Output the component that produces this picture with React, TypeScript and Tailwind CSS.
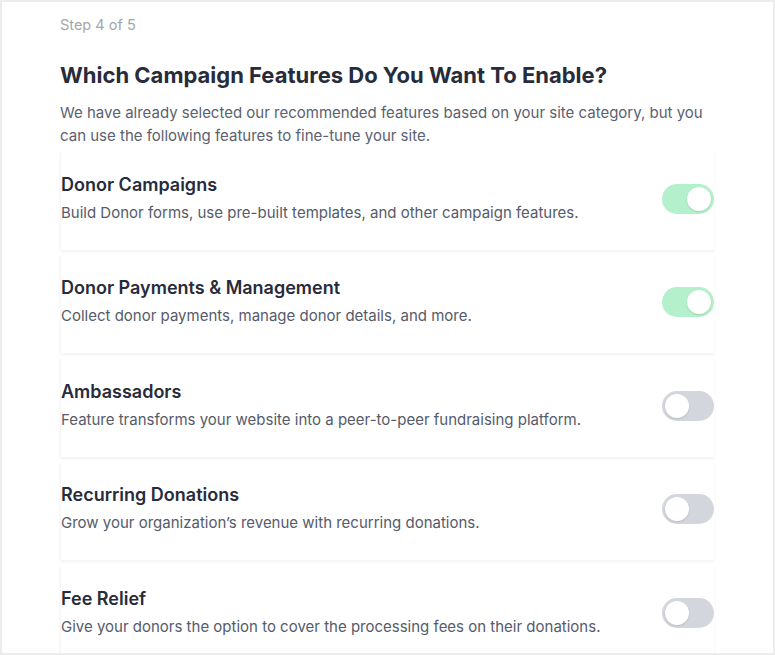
import React from 'react';

interface Feature {
    title: string;
    description: string;
    enabled: boolean;
}

const features: Feature[] = [
    {
        title: 'Donor Campaigns',
        description: 'Build Donor forms, use pre-built templates, and other campaign features.',
        enabled: true,
    },
    {
        title: 'Donor Payments & Management',
        description: 'Collect donor payments, manage donor details, and more.',
        enabled: true,
    },
    {
        title: 'Ambassadors',
        description: 'Feature transforms your website into a peer-to-peer fundraising platform.',
        enabled: false,
    },
    {
        title: 'Recurring Donations',
        description: 'Grow your organization’s revenue with recurring donations.',
        enabled: false,
    },
    {
        title: 'Fee Relief',
        description: 'Give your donors the option to cover the processing fees on their donations.',
        enabled: false,
    },
];

const Toggle: React.FC<{ on: boolean; onChange: () => void }> = ({ on, onChange }) => (
    <button
        type="button"
        onClick={onChange}
        className={`relative w-[52px] h-[30px] rounded-full shrink-0 transition-colors ${on ? 'bg-[#b4f0cb]' : 'bg-[#d3d6dc]'}`}
    >
        <span
            className={`absolute top-[3px] w-6 h-6 rounded-full bg-white shadow-[0_1px_2px_rgba(0,0,0,0.12)] transition-all ${on ? 'left-[25px]' : 'left-[3px]'}`}
        />
    </button>
);

const FeatureCard: React.FC<Feature & { onToggle: () => void }> = ({ title, description, enabled, onToggle }) => (
    <div className="flex items-center justify-between bg-white pt-[21px] pb-[25px] shadow-[0_2px_3px_rgba(0,0,0,0.05)] border-l border-[#f6f6f6]">
        <div>
            <h3 className="text-[18px] leading-6 font-semibold text-[#272b3a]">{title}</h3>
            <p className="text-[15px] leading-6 text-[#555b6a] mt-1">{description}</p>
        </div>
        <Toggle on={enabled} onChange={onToggle} />
    </div>
);

export default function App() {
    const [items, setItems] = React.useState(features);

    const toggle = (index: number) => {
        setItems((prev) => prev.map((f, i) => (i === index ? { ...f, enabled: !f.enabled } : f)));
    };

    return (
        <div
            className="w-[775px] h-[655px] overflow-hidden bg-white border-2 border-[#ececec]"
            style={{ fontFamily: 'Inter, "Noto Sans", sans-serif' }}
        >
            <div className="pl-[58px] pr-[59px] pt-[13px]">
                <p className="text-[14.5px] leading-5 text-[#a2a6ad]">Step 4 of 5</p>

                <h1 className="mt-[26px] text-[22px] leading-7 font-bold text-[#272b3a]">
                    Which Campaign Features Do You Want To Enable?
                </h1>
                <p className="mt-[12px] text-[15px] leading-[23px] text-[#5b6170]">
                    We have already selected our recommended features based on your site category, but you can use
                    the following features to fine-tune your site.
                </p>

                <div className="mt-[5px] flex flex-col gap-[5.4px]">
                    {items.map((f, i) => (
                        <FeatureCard key={f.title} {...f} onToggle={() => toggle(i)} />
                    ))}
                </div>
            </div>
        </div>
    );
}
